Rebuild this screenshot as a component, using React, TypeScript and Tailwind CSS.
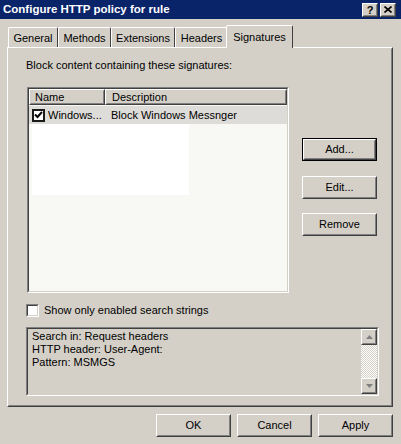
import React from 'react';

const FONT = { fontFamily: '"Liberation Sans", Arial, sans-serif' };

const Raised: React.FC<{ children?: React.ReactNode; className?: string }> = ({ children, className = '' }) => (
  <div className={`bg-[#d4d0c8] border border-t-white border-l-white border-r-[#404040] border-b-[#404040] ${className}`}>
    <div className="w-full h-full flex items-center justify-center border border-t-[#d4d0c8] border-l-[#d4d0c8] border-r-[#808080] border-b-[#808080]">
      {children}
    </div>
  </div>
);

const Sunken: React.FC<{ children?: React.ReactNode; className?: string; inner?: string }> = ({ children, className = '', inner = '' }) => (
  <div className={`border border-t-[#808080] border-l-[#808080] border-r-white border-b-white ${className}`}>
    <div className={`w-full h-full border border-t-[#404040] border-l-[#404040] border-r-[#d4d0c8] border-b-[#d4d0c8] ${inner}`}>
      {children}
    </div>
  </div>
);

const Button: React.FC<{ label: string; isDefault?: boolean }> = ({ label, isDefault }) =>
  isDefault ? (
    <div className="w-[75px] h-[23px] border border-black">
      <Raised className="w-full h-full">{label}</Raised>
    </div>
  ) : (
    <Raised className="w-[75px] h-[23px]">{label}</Raised>
  );

const Tab: React.FC<{ label: string; w: string }> = ({ label, w }) => (
  <div className={`${w} h-[20px] flex items-center justify-center rounded-t-[2px] border-t border-l border-r border-t-white border-l-white border-r-[#404040]`}>
    <span className="pt-[2px]">{label}</span>
  </div>
);

const Arrow: React.FC<{ down?: boolean }> = ({ down }) => (
  <Raised className="w-[16px] h-[16px]">
    <svg width="7" height="4" viewBox="0 0 7 4">
      {down ? <polygon points="0,0 7,0 3.5,4" fill="#808080" /> : <polygon points="0,4 7,4 3.5,0" fill="#808080" />}
    </svg>
  </Raised>
);

export default function App() {
  return (
    <div className="w-[401px] h-[444px] bg-[#d4d0c8] text-[11px] leading-[13px] text-black overflow-hidden flex flex-col" style={FONT}>
      {/* title bar */}
      <div className="h-[19px] bg-[#0a246a] flex items-center justify-between pl-[3px] pr-[5px]">
        <span className="text-white font-bold text-[11.5px]">Configure HTTP policy for rule</span>
        <div className="flex gap-[2px]">
          <Raised className="w-[16px] h-[14px]">
            <span className="font-bold text-[11px] leading-[10px]">?</span>
          </Raised>
          <Raised className="w-[16px] h-[14px]">
            <svg width="8" height="7" viewBox="0 0 8 7">
              <path d="M0.5 0.5 L7.5 6.5 M7.5 0.5 L0.5 6.5" stroke="black" strokeWidth="1.6" />
            </svg>
          </Raised>
        </div>
      </div>

      {/* tabs */}
      <div className="mt-[6px] ml-[8px] h-[22px] flex items-end">
        <Tab label="General" w="w-[50px]" />
        <Tab label="Methods" w="w-[53px]" />
        <Tab label="Extensions" w="w-[64px]" />
        <Tab label="Headers" w="w-[53px]" />
        <div className="relative z-10 -ml-[2px] -mb-[1px] w-[67px] h-[23px] bg-[#d4d0c8] flex items-start justify-center pt-[5px] rounded-t-[2px] border-t border-l border-r border-t-white border-l-white border-r-[#404040]">
          Signatures
        </div>
      </div>

      {/* panel */}
      <div className="ml-[7px] w-[386px] h-[360px] border border-t-white border-l-white border-r-[#404040] border-b-[#404040]">
        <div className="w-full h-full border border-t-[#d4d0c8] border-l-[#d4d0c8] border-r-[#808080] border-b-[#808080] pl-[17px] pt-[10px]">
          <div className="h-[13px]">Block content containing these signatures:</div>

          <div className="mt-[15px] flex">
            <Sunken className="ml-[1px] w-[262px] h-[206px]" inner="bg-[#f8f8f4] flex flex-col">
              <div className="h-[16px] flex">
                <Raised className="w-[76px] h-full">
                  <span className="w-full pl-[4px]">Name</span>
                </Raised>
                <Raised className="flex-1 h-full">
                  <span className="w-full pl-[5px]">Description</span>
                </Raised>
              </div>
              <div className="mt-[1px] h-[18px] bg-[#dedcd8] flex items-center">
                <div className="ml-[3px] w-[13px] h-[13px] border-[2px] border-[#1a1a1a] bg-white flex items-center justify-center">
                  <svg width="9" height="8" viewBox="0 0 9 8">
                    <path d="M1 3.5 L3.5 6 L8 1" stroke="black" strokeWidth="2" fill="none" />
                  </svg>
                </div>
                <span className="ml-[3px] w-[63px]">Windows...</span>
                <span>Block Windows Messnger</span>
              </div>
              <div className="ml-[3px] w-[157px] h-[71px] bg-white" />
            </Sunken>

            <div className="ml-[13px] flex flex-col">
              <div className="mt-[51px]">
                <Button label="Add..." isDefault />
              </div>
              <div className="mt-[15px]">
                <Button label="Edit..." />
              </div>
              <div className="mt-[14px]">
                <Button label="Remove" />
              </div>
            </div>
          </div>

          <div className="mt-[11px] flex items-center">
            <Sunken className="w-[13px] h-[13px]" inner="bg-white" />
            <span className="ml-[5px]">Show only enabled search strings</span>
          </div>

          <Sunken className="mt-[10px] w-[353px] h-[69px]" inner="flex">
            <div className="flex-1 pl-[4px] pt-[1px]">
              <div>Search in: Request headers</div>
              <div>HTTP header: User-Agent:</div>
              <div>Pattern: MSMGS</div>
            </div>
            <div className="w-[16px] h-full flex flex-col">
              <Arrow />
              <div className="flex-1 bg-[repeating-conic-gradient(#ffffff_0%_25%,#d4d0c8_0%_50%)] bg-[length:2px_2px]" />
              <Arrow down />
            </div>
          </Sunken>
        </div>
      </div>

      {/* footer buttons */}
      <div className="mt-[7px] pr-[8px] flex justify-end gap-[6px]">
        <Button label="OK" />
        <Button label="Cancel" />
        <Button label="Apply" />
      </div>
    </div>
  );
}
